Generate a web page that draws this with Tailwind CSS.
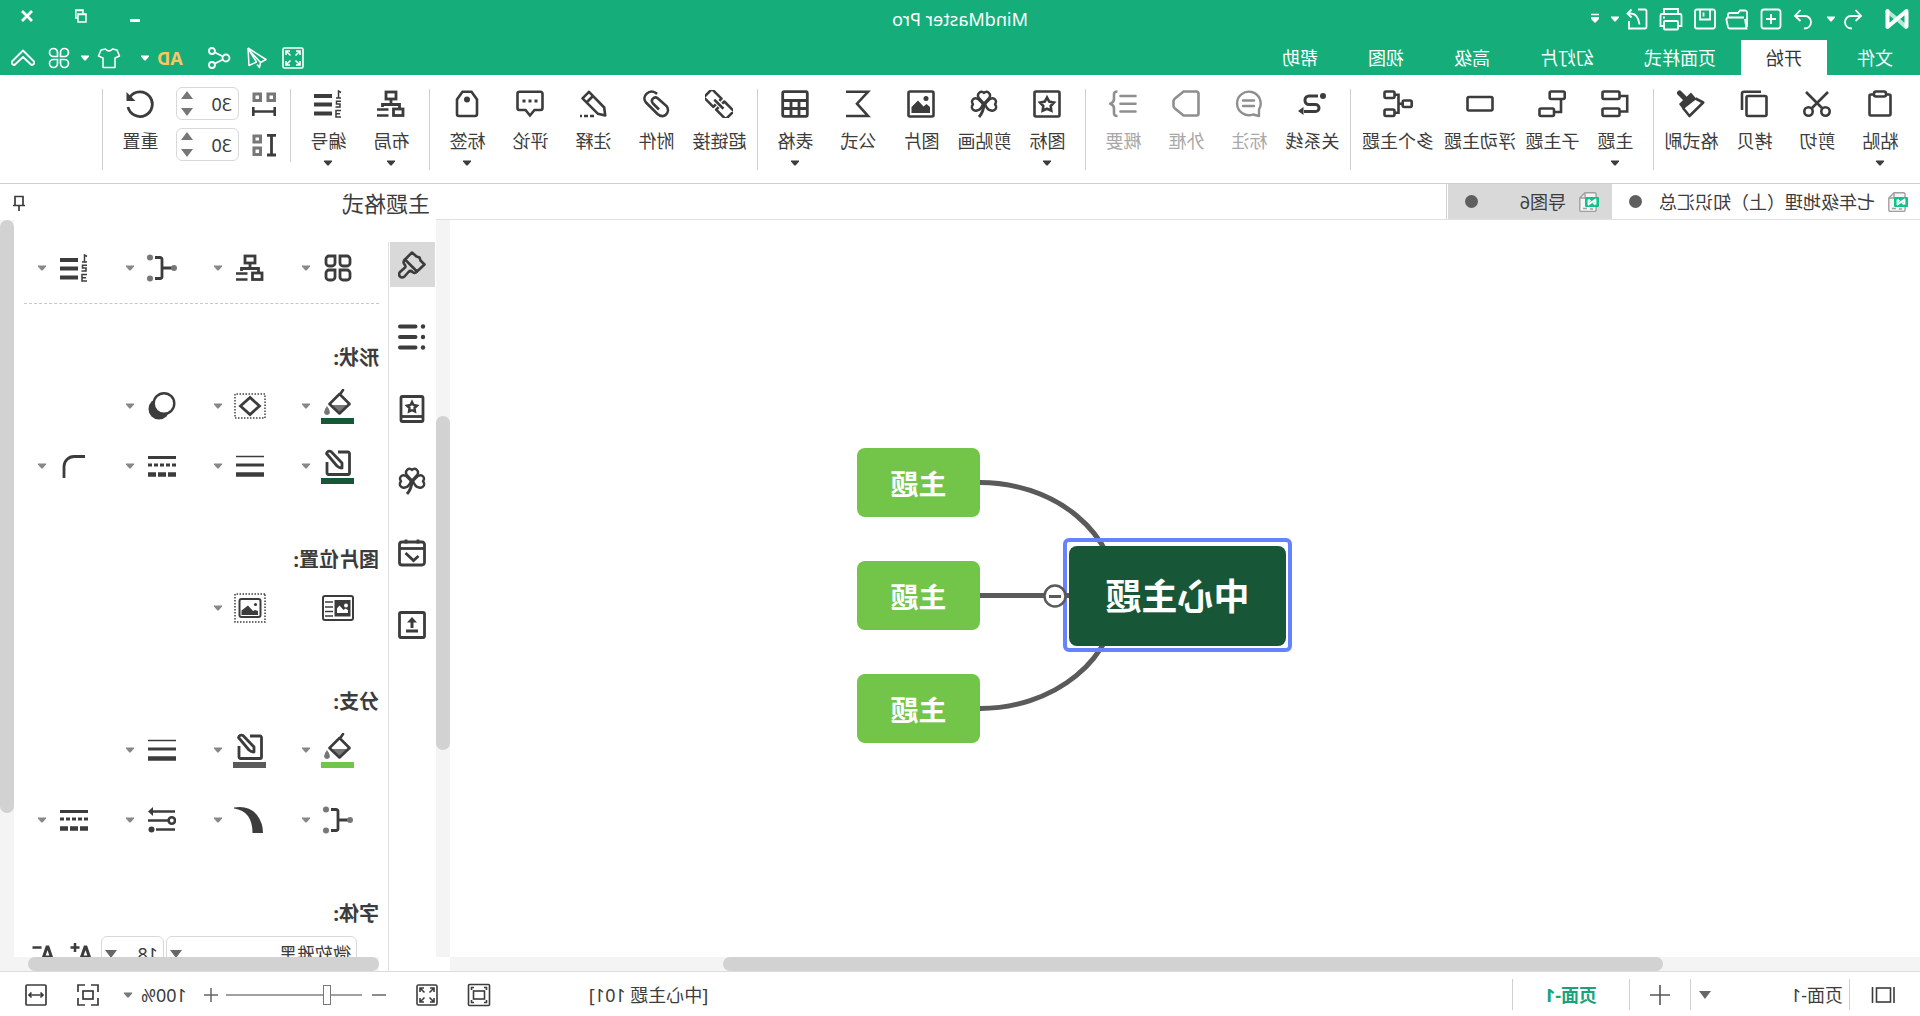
<!DOCTYPE html>
<html lang="zh-CN">
<head>
<meta charset="utf-8">
<title>MindMaster Pro</title>
<script src="https://cdn.jsdelivr.net/npm/@tailwindcss/browser@4"></script>
</head>
<body class="overflow-hidden bg-white">
<svg class="hidden" aria-hidden="true">
  <defs>
    <symbol id="caret" viewBox="0 0 8 5"><path d="M0 0h8v1L4.600 5h-1.200L0 1z" fill="currentColor"/></symbol>
    <symbol id="paste" viewBox="0 0 28 28"><g fill="none" stroke="currentColor" stroke-width="2.600"><rect x="3.500" y="4.500" width="21" height="21" rx="1.500"/><rect x="8" y="1.500" width="12" height="5" rx="2" fill="#fff"/></g></symbol>
    <symbol id="cut" viewBox="0 0 28 28"><g fill="none" stroke="currentColor" stroke-width="2.600"><circle cx="5.500" cy="21.500" r="4.200"/><circle cx="22.500" cy="21.500" r="4.200"/><path d="M8.500 18.500L25 2M19.500 18.500L3 2"/></g></symbol>
    <symbol id="copy" viewBox="0 0 28 28"><g fill="none" stroke="currentColor" stroke-width="2.600"><rect x="1.500" y="6" width="20" height="20" rx="1.500"/><path d="M7 1.800h17a2 2 0 0 1 2 2V20"/></g></symbol>
    <symbol id="brushfmt" viewBox="0 0 28 28"><path d="M25.500 3l-5 5" stroke="currentColor" stroke-width="5" stroke-linecap="round"/><path d="M14 2.500L26 14L22 19.500L8.500 9z" fill="currentColor"/><path d="M9.500 8.500L1.800 12.500L15.500 26L22 18" fill="none" stroke="currentColor" stroke-width="2.600" stroke-linejoin="round"/></symbol>
    <symbol id="topic" viewBox="0 0 28 28"><g fill="none" stroke="currentColor" stroke-width="2.600"><rect x="9.500" y="1.500" width="17" height="7.500" rx="1.500"/><rect x="9.500" y="18.500" width="17" height="7.500" rx="1.500"/><path d="M9 6H1.800v15.500H9"/></g></symbol>
    <symbol id="subtopic" viewBox="0 0 28 28"><g fill="none" stroke="currentColor" stroke-width="2.600"><rect x="1.300" y="1.500" width="15" height="7.500" rx="1.500"/><rect x="12" y="18.500" width="14.500" height="7.500" rx="1.500"/><path d="M5 9v13h7"/></g></symbol>
    <symbol id="float" viewBox="0 0 28 28"><rect x="1.500" y="7" width="25" height="13.500" rx="1.500" fill="none" stroke="currentColor" stroke-width="2.600"/></symbol>
    <symbol id="multi" viewBox="0 0 30 28"><g fill="none" stroke="currentColor" stroke-width="2.600"><rect x="1.300" y="10.500" width="9" height="6.500" rx="1.500"/><rect x="18.500" y="1.500" width="10" height="6.500" rx="1.500"/><rect x="18.500" y="19.500" width="10" height="6.500" rx="1.500"/><path d="M10 13.700h4.500M18 4.700h-3.500v18H18"/></g></symbol>
    <symbol id="relation" viewBox="0 0 28 28"><circle cx="3" cy="6" r="3" fill="currentColor"/><path d="M8 6h9a4 4 0 0 1 4 4v.500a4 4 0 0 1-4 4h-6.500a3.500 3.500 0 0 0-3.500 3.500a3.500 3.500 0 0 0 3.500 3.500H22" fill="none" stroke="currentColor" stroke-width="3"/><path d="M22.500 17l5.500 4-5.500 4z" fill="currentColor"/></symbol>
    <symbol id="callout" viewBox="0 0 28 28"><g fill="none" stroke="currentColor" stroke-width="2.400"><path d="M4 26v-6.500A11.800 11.800 0 1 1 10 24.500z" stroke-linejoin="round"/><path d="M9 10.500h11M9 16h11" stroke-linecap="round"/></g></symbol>
    <symbol id="frame" viewBox="0 0 28 28"><path d="M1.500 3.500a2 2 0 0 1 2-2H16.500L25 8.500q1.500 1.300 1.500 2.500v5q0 1.200-1.500 2.500L16.500 25.500H3.500a2 2 0 0 1-2-2z" fill="none" stroke="currentColor" stroke-width="2.600"/></symbol>
    <symbol id="summary" viewBox="0 0 28 28"><g fill="none" stroke="currentColor" stroke-width="2.600"><path d="M1.500 6h15M1.500 13.700h15M1.500 21.500h15" stroke-linecap="round"/><path d="M19.500 1.500c3 0 3.500 1 3.500 3v4.500c0 2 .800 3.500 3.500 4.700c-2.700 1.200-3.500 2.700-3.500 4.700V23c0 2-.500 3-3.500 3"/></g></symbol>
    <symbol id="star" viewBox="0 0 28 28"><g fill="none" stroke="currentColor" stroke-width="2.600"><rect x="1.500" y="1.500" width="25" height="25" rx="1.500"/><path d="M14 7.500l2.200 4.100 4.700.900-3.200 3.500.600 4.600L14 18.700l-4.300 1.900.600-4.600-3.200-3.500 4.700-.900z"/></g></symbol>
    <symbol id="clover" viewBox="0 0 28 28"><g fill="none" stroke="currentColor" stroke-width="2.400" stroke-linejoin="round"><path d="M14 13.500L8.500 7.500C6.500 4 11 -.500 14 3C17 -.500 21.500 4 19.500 7.500z"/><path d="M13 14L8 9C3.500 6.500 .500 11 3 14.200C.500 17.500 2.500 21.500 7 20.500C10 20 12 17 13 14z"/><path d="M15 14l5-5c4.500-2.500 7.500 2 5 5.200c2.500 3.300.500 7.300-4 6.300c-3-.500-5-3.500-6-6.500z"/><path d="M14 14q.500 8 5 13" stroke-width="3"/></g></symbol>
    <symbol id="picture" viewBox="0 0 28 28"><rect x="1.500" y="1.500" width="25" height="25" rx="1.500" fill="none" stroke="currentColor" stroke-width="2.600"/><circle cx="9" cy="8.500" r="2.500" fill="currentColor"/><path d="M5 23v-6l3.500-3 3 2.500L17 10.500l6.500 6.500v6z" fill="currentColor"/></symbol>
    <symbol id="sigma" viewBox="0 0 28 28"><path d="M26 1.800H4L15 13.700L4 26h22" fill="none" stroke="currentColor" stroke-width="2.600"/></symbol>
    <symbol id="table" viewBox="0 0 28 28"><g fill="none" stroke="currentColor" stroke-width="2.800"><rect x="1.700" y="1.700" width="24.600" height="24.600" rx="1.500"/><path d="M1.700 10.500h24.600M1.700 18.500h24.600M10 10v16M18 10v16"/></g></symbol>
    <symbol id="link" viewBox="0 0 28 28"><g transform="rotate(-45 14 14)" fill="none" stroke="currentColor" stroke-width="2.600" stroke-linejoin="round"><path d="M12 16.500V20H-1.500V8.500H12v3M16 11.500V8.500H29.500V20H16v-3.500M7.500 14.200h13"/></g></symbol>
    <symbol id="clip" viewBox="0 0 28 28"><path d="M13 4l1-1c7-4.500 15 3.500 10 9.500L12.500 24c-6.500 5.500-13.500-1.500-9-8L12 8.500c4-3 8 1.500 5 5L11 19.500" fill="none" stroke="currentColor" stroke-width="2.600"/></symbol>
    <symbol id="note" viewBox="0 0 28 28"><g fill="none" stroke="currentColor" stroke-width="2.600" stroke-linejoin="round"><path d="M1.800 25.500l1-8L18 1.800l6.500 6.500L9 23.800z"/><path d="M14 6l6.500 6.500"/><path d="M13 26h14" stroke-dasharray="4 2"/></g></symbol>
    <symbol id="comment" viewBox="0 0 28 28"><path d="M3.500 1.800h21a2 2 0 0 1 2 2V18a2 2 0 0 1-2 2h-6L14 25.500L9.500 20h-6a2 2 0 0 1-2-2V3.800a2 2 0 0 1 2-2z" fill="none" stroke="currentColor" stroke-width="2.600"/><path d="M6.500 11h15" stroke="currentColor" stroke-width="3" stroke-dasharray="3 3"/></symbol>
    <symbol id="tag" viewBox="0 0 28 28"><path d="M9.500 1.800h9L24 9.500V24a2 2 0 0 1-2 2H6a2 2 0 0 1-2-2V9.500z" fill="none" stroke="currentColor" stroke-width="2.600"/><circle cx="14" cy="9.500" r="3" fill="currentColor"/></symbol>
    <symbol id="layout" viewBox="0 0 28 28"><g fill="none" stroke="currentColor" stroke-width="2.800"><rect x="9" y="2" width="10" height="7"/><path d="M14 9v5M5.500 19v-4.500h17V17"/><rect x="2" y="19" width="9.500" height="6.500"/><path d="M16.500 19.500H28M16.500 25.500H28" stroke-width="2.400"/></g></symbol>
    <symbol id="number" viewBox="0 0 28 28"><g fill="none" stroke="currentColor"><path d="M10 6h18M10 14.500h18M10 23.500h18" stroke-width="4"/><path d="M1 2.500L3.500 1V7.500M1 8h5M1 11.200h4.500v2.800H2v3h4.500M1 20.500h5v6.500H1M2 23.700h4" stroke-width="1.500"/></g></symbol>
    <symbol id="hspace" viewBox="0 0 24 24"><g fill="none"><path d="M1.500 2h6.500v6.500H1.500zM15.500 2H22v6.500h-6.500z" stroke="#777" stroke-width="3"/><path d="M1.300 15v9M22.700 15v9M0 19.500h24" stroke="currentColor" stroke-width="2.600"/></g></symbol>
    <symbol id="vspace" viewBox="0 0 24 24"><g fill="none"><path d="M15.500 3H22v6h-6.500zM15.500 15H22v6.500h-6.500z" stroke="#777" stroke-width="3"/><path d="M0 2.300h9M0 22h9M4.500 2v20" stroke="currentColor" stroke-width="2.800"/></g></symbol>
    <symbol id="reset" viewBox="0 0 28 28"><path d="M26 17A12.300 12.300 0 1 1 24 7" fill="none" stroke="currentColor" stroke-width="2.800"/><path d="M27.500 2v9H18.500z" fill="currentColor"/></symbol>
    <symbol id="grid4" viewBox="0 0 28 28"><g fill="none" stroke="currentColor" stroke-width="2.800"><path d="M2 5a3 3 0 0 1 3-3h7v7a3 3 0 0 1-3 3H5a3 3 0 0 1-3-3zM17 2h6a3 3 0 0 1 3 3v4a3 3 0 0 1-3 3h-3a3 3 0 0 1-3-3zM5 16h7v7a3 3 0 0 1-3 3H5a3 3 0 0 1-3-3v-4a3 3 0 0 1 3-3zM17 16h6a3 3 0 0 1 3 3v4a3 3 0 0 1-3 3h-3a3 3 0 0 1-3-3z"/></g></symbol>
    <symbol id="branch" viewBox="0 0 30 28"><path d="M5 14h9M22 3.500h-5a2 2 0 0 0-2 2v17a2 2 0 0 0 2 2h5" fill="none" stroke="currentColor" stroke-width="2.800"/><g fill="#777"><circle cx="3" cy="14" r="3"/><circle cx="27" cy="3.500" r="3"/><circle cx="27" cy="24.500" r="3"/></g></symbol>
    <symbol id="paintbrush" viewBox="0 0 28 28"><g fill="none" stroke="currentColor" stroke-width="2.600" stroke-linejoin="round"><path d="M14 1.500L21 8.500L9 20.500L1.500 13.500L5.500 9.500L6.500 6.500L9.500 5.500z"/><path d="M21 8.500q2.500 2.500 .500 5q-2 2 0 3.500l4.500 4q2 2.500 0 4.500q-2 2-4.500 0l-4-4.500q-2-2-4 0q-2.500 2-4.500-.500"/></g></symbol>
    <symbol id="listdots" viewBox="0 0 28 28"><path d="M10.500 3.500h15.500M10.500 14h15.500M10.500 24.500h15.500" stroke="currentColor" stroke-width="4" stroke-linecap="round"/><g fill="currentColor"><circle cx="3" cy="3.500" r="2.200"/><circle cx="3" cy="14" r="2.200"/><circle cx="3" cy="24.500" r="2.200"/></g></symbol>
    <symbol id="book" viewBox="0 0 28 28"><g fill="none" stroke="currentColor" stroke-width="2.800"><rect x="3" y="1.500" width="22" height="25" rx="1.500"/><path d="M3 21.500h22"/><path d="M14 7l1.500 3 3.500.700-2.500 2.300.500 3.500-3-1.300-3 1.300.500-3.500L9 10.700l3.500-.700z" stroke-width="2.400"/></g></symbol>
    <symbol id="calendar" viewBox="0 0 28 28"><g fill="none" stroke="currentColor" stroke-width="2.800"><rect x="1.500" y="3" width="25" height="23" rx="2.500"/><path d="M1.500 9.500h25"/><path d="M8 .500v4M20 .500v4M7.500 17l5 4.500L20.500 14"/></g></symbol>
    <symbol id="upload" viewBox="0 0 28 28"><rect x="1.500" y="1.500" width="25" height="25" rx="1.500" fill="none" stroke="currentColor" stroke-width="2.800"/><path d="M14 6l5 5.500h-3.500V17h-3v-5.500H9zM8 18.500h12v3H8z" fill="currentColor"/></symbol>
    <symbol id="bucket" viewBox="0 0 28 28"><path d="M3.500 16h19L13 25z" fill="#777"/><path d="M9 1L12 5.500M12.500 5L2.500 15l10 9.500L22.500 15z" fill="none" stroke="currentColor" stroke-width="2.600" stroke-linejoin="round" stroke-linecap="round"/><path d="M25 17q3.500 4.500 2.800 7a3 3 0 0 1-5.600 0Q21.500 21.500 25 17z" fill="#777"/></symbol>
    <symbol id="penbox" viewBox="0 0 28 28"><g fill="none" stroke="currentColor" stroke-width="2.800" stroke-linejoin="round"><path d="M14 3H4a1.500 1.500 0 0 0-1.500 1.500V24A1.500 1.500 0 0 0 4 25.500h19.500A1.500 1.500 0 0 0 25 24V13"/><path d="M10 19v-5L21 2.500q3-1.500 4.500 2L15 17q-2 2-5 2z"/></g></symbol>
    <symbol id="shape" viewBox="0 0 32 26"><rect x="1" y="1" width="30" height="24" fill="none" stroke="#434343" stroke-width="1.500" stroke-dasharray="1.500 1.500"/><path d="M16 4.500l9.500 8.500L16 21.500 6.500 13z" fill="none" stroke="currentColor" stroke-width="2.800"/></symbol>
    <symbol id="shadow" viewBox="0 0 28 28"><circle cx="17" cy="17" r="10.500" fill="currentColor"/><circle cx="12" cy="11.500" r="10.300" fill="#fff" stroke="currentColor" stroke-width="2.400"/></symbol>
    <symbol id="weights" viewBox="0 0 28 24"><path d="M0 2.500h28" stroke="currentColor" stroke-width="1.500"/><path d="M0 11h28" stroke="currentColor" stroke-width="3"/><path d="M0 20.500h28" stroke="currentColor" stroke-width="4.500"/></symbol>
    <symbol id="dashes" viewBox="0 0 28 24"><path d="M0 3.500h28" stroke="currentColor" stroke-width="3"/><path d="M0 11h28" stroke="currentColor" stroke-width="3" stroke-dasharray="4 2"/><path d="M0 20.500h28" stroke="currentColor" stroke-width="4.500" stroke-dasharray="8 2"/></symbol>
    <symbol id="corner" viewBox="0 0 28 24"><path d="M3 2.500h11a10 10 0 0 1 10 10V24" fill="none" stroke="currentColor" stroke-width="2.800"/></symbol>
    <symbol id="picleft" viewBox="0 0 32 26"><rect x="1" y="1" width="30" height="24" rx="2" fill="none" stroke="currentColor" stroke-width="2"/><rect x="3.500" y="5" width="16" height="16.500" fill="currentColor"/><circle cx="8" cy="10.500" r="2" fill="#fff"/><path d="M6 18v-3l2.500-1.500 2 1.500 4-4.500 2.500 3V18z" fill="#fff"/><path d="M21 7h8M21 12h8M21 16.500h8M21 21h8" stroke="currentColor" stroke-width="1.500"/></symbol>
    <symbol id="picdot" viewBox="0 0 32 30"><rect x="1" y="1" width="30" height="28" fill="none" stroke="currentColor" stroke-width="1.500" stroke-dasharray="1.500 1.500"/><rect x="5.500" y="6" width="21" height="18" rx="2" fill="none" stroke="currentColor" stroke-width="2"/><circle cx="10.500" cy="11.500" r="1.600" fill="currentColor"/><path d="M8 22v-4l3-1 2 1 5-5.500 6.500 5V22z" fill="currentColor"/></symbol>
    <symbol id="taper" viewBox="0 0 30 28"><path d="M30 1.500Q15 -1 7 9Q1 17 1 27h10.500Q11.500 5 30 2.500z" fill="currentColor"/></symbol>
    <symbol id="arrows" viewBox="0 0 28 28"><g stroke="currentColor" stroke-width="2.600" fill="none"><path d="M1 5.500h23M8 14.500h20M1 23.500h19"/><circle cx="4.200" cy="14.500" r="3.200"/></g><path d="M23 1l5 4.500-5 4.500z" fill="currentColor"/><circle cx="24.500" cy="23.500" r="3" fill="currentColor"/></symbol>
    <symbol id="expand" viewBox="0 0 24 24"><g fill="none" stroke="currentColor" stroke-width="1.600"><rect x="2" y="2" width="20" height="20" rx="1.500"/><path d="M5 9V5h4M15 5h4v4M19 15v4h-4M9 19H5v-4M5.500 5.500L9.500 9.500M18.500 5.500l-4 4M5.500 18.500l4-4M18.500 18.500l-4-4"/></g></symbol>
    <symbol id="docicon" viewBox="0 0 20 20"><path d="M4.500 .800h9.500L19.200 6v12a1.400 1.400 0 0 1-1.400 1.400H4.300A1.400 1.400 0 0 1 2.900 18V2.200A1.400 1.400 0 0 1 4.500 .800z" fill="#f4f4f4" stroke="#a0a0a0" stroke-width="1.400"/><path d="M14 1v5h5M6 17h3M12 16.500h4" fill="none" stroke="#a0a0a0" stroke-width="1.400"/><rect x="0" y="5" width="14" height="10" rx="1" fill="#12c08a"/><path d="M3.500 12.500v-5L10.500 12.500v-5M3.500 12.500L6 10.700M10.500 7.500L8.500 9.300" fill="none" stroke="#fff" stroke-width="1.800" stroke-linejoin="round"/></symbol>
  </defs>
</svg>

<div class="flex h-screen w-full -scale-x-100 flex-col bg-white font-['Noto_Sans','Noto_Sans_CJK_SC',sans-serif] text-lg leading-7 text-[#3c3c3c]">

  <header class="bg-[#15ae7a] text-white">
    <div class="grid h-10 grid-cols-[1fr_auto_1fr]">
      <div class="flex items-center pb-0.5 pl-[11px]">
        <svg class="h-6 w-6" viewBox="0 0 24 24" role="img" aria-label="MindMaster" fill="none" stroke="#fff" stroke-linejoin="round" stroke-linecap="round"><path d="M14 10.500L21.500 4.500M3 20L10 13.500" stroke-width="4" stroke-opacity="0.700"/><path d="M2.500 19.500V4L21.500 20V4" stroke-width="4"/></svg>
        <button aria-label="撤销" class="ml-5"><svg class="h-6 w-6" viewBox="0 0 24 24" fill="none" stroke="currentColor" stroke-width="1.800"><path d="M9.500 3L4 9l5.500 5M4 9h10a6 6 0 0 1 6 6c0 4-3 6.500-7 6.500"/></svg></button>
        <button aria-label="撤销列表" class="ml-1.5"><svg class="h-1.5 w-2"><use href="#caret"/></svg></button>
        <button aria-label="重做" class="ml-3"><svg class="h-6 w-6" viewBox="0 0 24 24" fill="none" stroke="currentColor" stroke-width="1.800"><path d="M14.500 3L20 9l-5.500 5M20 9H10a6 6 0 0 0-6 6c0 4 3 6.500 7 6.500"/></svg></button>
        <button aria-label="新建" class="ml-2"><svg class="h-6 w-6" viewBox="0 0 24 24" fill="none" stroke="currentColor" stroke-width="1.800"><rect x="2.500" y="2.500" width="19" height="19" rx="2.500"/><path d="M12 7v10M7 12h10"/></svg></button>
        <button aria-label="打开" class="ml-2.5"><svg class="h-6 w-6" viewBox="0 0 24 24" fill="none" stroke="currentColor" stroke-width="1.800"><path d="M2 20V5.500a2 2 0 0 1 2-2h5l2 2.500h8a2 2 0 0 1 2 2v2"/><path d="M5 10.500h16a2 2 0 0 1 1.500 2.500L21 20a2 2 0 0 1-2 1.500H2.500L4 12"/></svg></button>
        <button aria-label="保存" class="ml-2"><svg class="h-6 w-6" viewBox="0 0 24 24" fill="none" stroke="currentColor" stroke-width="1.800"><rect x="2" y="2.500" width="20" height="19" rx="2"/><path d="M7 3v9.500h10V3M13.500 5.500v4"/></svg></button>
        <button aria-label="打印" class="ml-2.5"><svg class="h-6 w-6" viewBox="0 0 24 24" fill="none" stroke="currentColor" stroke-width="1.800"><path d="M5 7V2h14v5M5 19H1.500V8.500a1.500 1.500 0 0 1 1.500-1.500h18a1.500 1.500 0 0 1 1.500 1.500V19H19M18 10.500h2"/><rect x="5" y="14" width="14" height="8.500" rx="1"/></svg></button>
        <button aria-label="导出" class="ml-2.5"><svg class="h-6 w-6" viewBox="0 0 24 24" fill="none" stroke="currentColor" stroke-width="1.800"><path d="M11 2.500H4a1.500 1.500 0 0 0-1.500 1.500v16A1.500 1.500 0 0 0 4 21.500h16V14"/><path d="M17.500 2.500l4 4-4 4M21 6.500h-3q-7 0-8.500 11"/></svg></button>
        <button aria-label="导出列表" class="ml-1.5"><svg class="h-1.5 w-2"><use href="#caret"/></svg></button>
        <button aria-label="自定义快速访问" class="ml-3"><svg class="h-3 w-2" viewBox="0 0 8 12"><path d="M0 1.500h8" stroke="#fff" stroke-width="1.500"/><path d="M0 4h8v2L4 10 0 6z" fill="#fff"/></svg></button>
      </div>
      <h1 class="self-center pb-0.5">MindMaster Pro</h1>
      <div class="flex justify-end pb-2">
        <button aria-label="最小化" class="flex w-[54px] items-center justify-center"><span class="mt-2 h-[3px] w-2.5 bg-white"></span></button>
        <button aria-label="还原" class="flex w-[54px] items-center justify-center"><svg class="h-3.5 w-3" viewBox="0 0 12 14" fill="none" stroke="#fff" stroke-width="1.500"><path d="M1 5h8v8H1zM1 5.500h8"/><path d="M4 5V1h7.200v8H9M4 1.500h7"/></svg></button>
        <button aria-label="关闭" class="flex w-[54px] items-center justify-center"><svg class="h-3 w-3" viewBox="0 0 12 12"><path d="M1 1l10 10M11 1L1 11" stroke="#fff" stroke-width="2.800"/></svg></button>
      </div>
    </div>
    <div class="flex h-[35px] items-stretch justify-between">
      <nav class="flex">
        <button class="mr-[3px] w-[90px]">文件</button>
        <button class="bg-white px-[25px] text-[#333]">开始</button>
        <button class="px-[25px]">页面样式</button>
        <button class="px-[25px]">幻灯片</button>
        <button class="px-[25px]">高级</button>
        <button class="px-[25px]">视图</button>
        <button class="px-[25px]">帮助</button>
      </nav>
      <div class="flex items-center pr-[11px]">
        <button aria-label="全屏"><svg class="h-6 w-6"><use href="#expand"/></svg></button>
        <button aria-label="发送" class="ml-3"><svg class="h-6 w-6" viewBox="0 0 24 24" fill="none" stroke="currentColor" stroke-width="1.500" stroke-linejoin="round"><path d="M21 2L3 13.500L8.500 16.500L20 4M8.500 16.500L9.500 21.500L12 18.500M21 2L20 19.500L12.500 16L20 4"/></svg></button>
        <button aria-label="分享" class="ml-3.5"><svg class="h-6 w-6" viewBox="0 0 24 24" fill="none" stroke="currentColor" stroke-width="1.800"><circle cx="5" cy="12" r="3.500"/><circle cx="19" cy="5" r="3"/><circle cx="19" cy="19" r="3"/><path d="M8 10.500l8-4M8 13.500l8 4"/></svg></button>
        <button class="ml-6 font-bold text-[#f8c662]">AD</button>
        <button aria-label="广告列表" class="ml-2"><svg class="h-1.5 w-2"><use href="#caret"/></svg></button>
        <button aria-label="皮肤" class="ml-5"><svg class="h-6 w-6" viewBox="0 0 24 24" fill="none" stroke="currentColor" stroke-width="1.500" stroke-linejoin="round"><path d="M8.500 3q3.500 4 7 0L20 4l2.500 6L18 12v9.500H6V12L1.500 10 4 4z"/></svg></button>
        <button aria-label="皮肤列表" class="ml-2"><svg class="h-1.5 w-2"><use href="#caret"/></svg></button>
        <button aria-label="应用" class="ml-2.5"><svg class="h-6 w-6" viewBox="0 0 24 24" fill="none" stroke="currentColor" stroke-width="1.700"><path d="M10.500 10.500H6.500a4 4 0 1 1 4-4zM13.500 10.500v-4a4 4 0 1 1 4 4zM10.500 13.500v4a4 4 0 1 1-4-4zM13.500 13.500h4a4 4 0 1 1-4 4z"/></svg></button>
        <button aria-label="收起" class="ml-3"><svg class="h-6 w-6" viewBox="0 0 24 24" fill="none" stroke="currentColor" stroke-width="1.800" stroke-linejoin="round"><path d="M12 4.500L23 15.500q1 3-2.500 3.500L12 11l-8.500 8Q0 18.500 1 15.500z"/></svg></button>
      </div>
    </div>
  </header>

  <section class="flex h-[109px] shrink-0 items-start border-b border-[#cfcfcf] pl-2 leading-[26px] whitespace-nowrap" aria-label="开始">
    <button class="flex w-[63px] flex-col items-center pt-[15px]"><svg class="h-7 w-7"><use href="#paste"/></svg><span class="mt-[10px]">粘贴</span><svg class="mt-1.5 h-1.5 w-2"><use href="#caret"/></svg></button>
    <button class="flex w-[63px] flex-col items-center pt-[15px]"><svg class="h-7 w-7"><use href="#cut"/></svg><span class="mt-[10px]">剪切</span></button>
    <button class="flex w-[63px] flex-col items-center pt-[15px]"><svg class="h-7 w-7"><use href="#copy"/></svg><span class="mt-[10px]">拷贝</span></button>
    <button class="flex w-[63px] flex-col items-center pt-[15px]"><svg class="h-7 w-7"><use href="#brushfmt"/></svg><span class="mt-[10px]">格式刷</span></button>
    <span class="mx-1.5 mt-3.5 h-[81px] w-px bg-[#cfcfcf]"></span>
    <button class="flex w-[63px] flex-col items-center pt-[15px]"><svg class="h-7 w-7"><use href="#topic"/></svg><span class="mt-[10px]">主题</span><svg class="mt-1.5 h-1.5 w-2"><use href="#caret"/></svg></button>
    <button class="flex w-[63px] flex-col items-center pt-[15px]"><svg class="h-7 w-7"><use href="#subtopic"/></svg><span class="mt-[10px]">子主题</span></button>
    <button class="flex w-[82px] flex-col items-center pt-[15px]"><svg class="h-7 w-7"><use href="#float"/></svg><span class="mt-[10px]">浮动主题</span></button>
    <button class="flex w-[82px] flex-col items-center pt-[15px]"><svg class="h-7 w-[30px]"><use href="#multi"/></svg><span class="mt-[10px]">多个主题</span></button>
    <span class="mx-1.5 mt-3.5 h-[81px] w-px bg-[#cfcfcf]"></span>
    <button class="flex w-[63px] flex-col items-center pt-[15px]"><svg class="h-7 w-7"><use href="#relation"/></svg><span class="mt-[10px]">关系线</span></button>
    <button disabled class="flex w-[63px] flex-col items-center pt-[15px] text-[#8f8f8f]"><svg class="h-7 w-7"><use href="#callout"/></svg><span class="mt-[10px] text-[#a8a8a8]">标注</span></button>
    <button disabled class="flex w-[63px] flex-col items-center pt-[15px] text-[#8f8f8f]"><svg class="h-7 w-7"><use href="#frame"/></svg><span class="mt-[10px] text-[#a8a8a8]">外框</span></button>
    <button disabled class="flex w-[63px] flex-col items-center pt-[15px] text-[#8f8f8f]"><svg class="h-7 w-7"><use href="#summary"/></svg><span class="mt-[10px] text-[#a8a8a8]">概要</span></button>
    <span class="mx-1.5 mt-3.5 h-[81px] w-px bg-[#cfcfcf]"></span>
    <button class="flex w-[63px] flex-col items-center pt-[15px]"><svg class="h-7 w-7"><use href="#star"/></svg><span class="mt-[10px]">图标</span><svg class="mt-1.5 h-1.5 w-2"><use href="#caret"/></svg></button>
    <button class="flex w-[63px] flex-col items-center pt-[15px]"><svg class="h-7 w-7"><use href="#clover"/></svg><span class="mt-[10px]">剪贴画</span></button>
    <button class="flex w-[63px] flex-col items-center pt-[15px]"><svg class="h-7 w-7"><use href="#picture"/></svg><span class="mt-[10px]">图片</span></button>
    <button class="flex w-[63px] flex-col items-center pt-[15px]"><svg class="h-7 w-7"><use href="#sigma"/></svg><span class="mt-[10px]">公式</span></button>
    <button class="flex w-[63px] flex-col items-center pt-[15px]"><svg class="h-7 w-7"><use href="#table"/></svg><span class="mt-[10px]">表格</span><svg class="mt-1.5 h-1.5 w-2"><use href="#caret"/></svg></button>
    <span class="mx-1.5 mt-3.5 h-[81px] w-px bg-[#cfcfcf]"></span>
    <button class="flex w-[63px] flex-col items-center pt-[15px]"><svg class="h-7 w-7"><use href="#link"/></svg><span class="mt-[10px]">超链接</span></button>
    <button class="flex w-[63px] flex-col items-center pt-[15px]"><svg class="h-7 w-7"><use href="#clip"/></svg><span class="mt-[10px]">附件</span></button>
    <button class="flex w-[63px] flex-col items-center pt-[15px]"><svg class="h-7 w-7"><use href="#note"/></svg><span class="mt-[10px]">注释</span></button>
    <button class="flex w-[63px] flex-col items-center pt-[15px]"><svg class="h-7 w-7"><use href="#comment"/></svg><span class="mt-[10px]">评论</span></button>
    <button class="flex w-[63px] flex-col items-center pt-[15px]"><svg class="h-7 w-7"><use href="#tag"/></svg><span class="mt-[10px]">标签</span><svg class="mt-1.5 h-1.5 w-2"><use href="#caret"/></svg></button>
    <span class="mx-1.5 mt-3.5 h-[81px] w-px bg-[#cfcfcf]"></span>
    <button class="flex w-[63px] flex-col items-center pt-[15px]"><svg class="h-7 w-7"><use href="#layout"/></svg><span class="mt-[10px]">布局</span><svg class="mt-1.5 h-1.5 w-2"><use href="#caret"/></svg></button>
    <button class="flex w-[63px] flex-col items-center pt-[15px]"><svg class="h-7 w-7"><use href="#number"/></svg><span class="mt-[10px]">编号</span><svg class="mt-1.5 h-1.5 w-2"><use href="#caret"/></svg></button>
    <span class="mx-1.5 mt-3.5 h-[73px] w-px bg-[#cfcfcf]"></span>
    <div class="flex flex-col gap-2 pt-3 pr-1 pl-2">
      <div class="flex items-center gap-[13px]">
        <label for="hgap" aria-label="水平间距"><svg class="h-6 w-6"><use href="#hspace"/></svg></label>
        <div class="flex h-[33px] w-[63px] items-center justify-between rounded-md border border-[#d9d9d9] pr-1">
          <input id="hgap" value="30" class="w-9 pl-1.5 outline-none">
          <span class="flex flex-col gap-[9px]"><button aria-label="增加" class="h-0 w-0 border-x-[6px] border-b-8 border-x-transparent border-b-[#777]"></button><button aria-label="减少" class="h-0 w-0 border-x-[6px] border-t-8 border-x-transparent border-t-[#777]"></button></span>
        </div>
      </div>
      <div class="flex items-center gap-[13px]">
        <label for="vgap" aria-label="垂直间距"><svg class="h-6 w-6"><use href="#vspace"/></svg></label>
        <div class="flex h-[33px] w-[63px] items-center justify-between rounded-md border border-[#d9d9d9] pr-1">
          <input id="vgap" value="30" class="w-9 pl-1.5 outline-none">
          <span class="flex flex-col gap-[9px]"><button aria-label="增加" class="h-0 w-0 border-x-[6px] border-b-8 border-x-transparent border-b-[#777]"></button><button aria-label="减少" class="h-0 w-0 border-x-[6px] border-t-8 border-x-transparent border-t-[#777]"></button></span>
        </div>
      </div>
    </div>
    <button class="flex w-[63px] flex-col items-center pt-[15px]"><svg class="h-7 w-7"><use href="#reset"/></svg><span class="mt-[10px]">重置</span></button>
    <span class="mx-1.5 mt-3.5 h-[81px] w-px bg-[#cfcfcf]"></span>
  </section>

  <main class="flex min-h-0 flex-1">
    <section class="flex min-w-0 flex-1 flex-col">
      <div class="flex h-9 shrink-0 border-b border-[#e0e0e0]">
        <button class="flex w-[308px] items-center pl-3"><svg class="h-5 w-5"><use href="#docicon"/></svg><span class="ml-[13px]">七年级地理（上）知识汇总</span><span class="ml-[17px] h-[13px] w-[13px] rounded-full bg-[#5f5f5f]"></span></button>
        <button class="flex w-[164px] items-center bg-[#d9d9d9] pl-[13px]"><svg class="h-5 w-5"><use href="#docicon"/></svg><span class="ml-[13px]">导图6</span><span class="mr-[17px] ml-auto h-[13px] w-[13px] rounded-full bg-[#5f5f5f]"></span></button>
        <span class="ml-px w-px bg-[#d0d0d0]"></span>
      </div>
      <div class="flex min-h-0 flex-1">
        <div class="flex min-w-0 flex-1 flex-col">
          <div class="relative min-h-0 flex-1 overflow-hidden font-bold text-white">
            <svg class="absolute top-[228px] left-[628px] h-[295px] w-[435px] text-[#5a5a5a]" viewBox="0 0 435 295" fill="none" stroke="currentColor" stroke-width="5"><path d="M312 34.500A137 114 0 0 0 175 148A137 114 0 0 0 312 260.500"/></svg>
            <div class="absolute top-[318px] left-[628px] h-[114px] w-[229px] rounded-md border-4 border-[#6683ff]"></div>
            <svg class="absolute top-[364px] left-[846px] h-6 w-[94px]" viewBox="0 0 94 24"><path d="M0 11.500h94" stroke="#5a5a5a" stroke-width="5"/><circle cx="19" cy="12" r="10.500" fill="#fff" stroke="#5a5a5a" stroke-width="2.500"/><path d="M13 12.500h12" stroke="#5a5a5a" stroke-width="3"/></svg>
            <div class="absolute top-[326px] left-[634px] flex h-[100px] w-[217px] items-center justify-center rounded-lg bg-[#175636] pt-0.5 text-[36px] leading-10">中心主题</div>
            <div class="absolute top-[228px] left-[940px] flex h-[69px] w-[123px] items-center justify-center rounded-lg bg-[#73c54a] pt-0.5 text-[28px] leading-8">主题</div>
            <div class="absolute top-[341px] left-[940px] flex h-[69px] w-[123px] items-center justify-center rounded-lg bg-[#73c54a] pt-0.5 text-[28px] leading-8">主题</div>
            <div class="absolute top-[454px] left-[940px] flex h-[69px] w-[123px] items-center justify-center rounded-lg bg-[#73c54a] pt-0.5 text-[28px] leading-8">主题</div>
          </div>
          <div class="h-3.5 shrink-0 bg-[#f4f4f4] pr-[273px] pl-[257px]"><div class="h-full rounded-full bg-[#d2d2d2]"></div></div>
        </div>
        <div class="mb-3.5 w-3.5 shrink-0 bg-[#f4f4f4] pt-[196px]"><div class="h-[334px] rounded-full bg-[#d2d2d2]"></div></div>
      </div>
    </section>

    <aside class="flex w-[436px] shrink-0 flex-col">
      <div class="flex h-9 shrink-0 items-center justify-between pt-0.5 pr-3 pl-1.5">
        <h2 class="text-[22px]">主题格式</h2>
        <button aria-label="固定"><svg class="h-4 w-3.5" viewBox="0 0 14 16" fill="none" stroke="currentColor" stroke-width="1.700"><path d="M3 10V1.500h8V10M1 10.500h12M7 11v5"/></svg></button>
      </div>
      <div class="flex min-h-0 flex-1">
        <nav class="mt-[22px] flex w-12 shrink-0 flex-col gap-[27px] border-r border-[#e0e0e0] pl-px">
          <button aria-label="格式" class="flex h-[45px] w-[45px] items-center justify-center bg-[#d9d9d9]"><svg class="h-7 w-7"><use href="#paintbrush"/></svg></button>
          <button aria-label="大纲" class="flex h-[45px] w-[45px] items-center justify-center"><svg class="h-7 w-7"><use href="#listdots"/></svg></button>
          <button aria-label="图标" class="flex h-[45px] w-[45px] items-center justify-center"><svg class="h-7 w-7"><use href="#book"/></svg></button>
          <button aria-label="剪贴画" class="flex h-[45px] w-[45px] items-center justify-center"><svg class="h-7 w-7"><use href="#clover"/></svg></button>
          <button aria-label="任务" class="flex h-[45px] w-[45px] items-center justify-center"><svg class="h-7 w-7"><use href="#calendar"/></svg></button>
          <button aria-label="导出" class="flex h-[45px] w-[45px] items-center justify-center"><svg class="h-7 w-7"><use href="#upload"/></svg></button>
        </nav>
        <div class="flex min-w-0 flex-1 flex-col">
          <div class="flex min-h-0 flex-1">
            <div class="min-w-0 flex-1 overflow-hidden pl-[9px]">
              <div class="mr-2.5 grid h-[84px] grid-cols-[repeat(4,88px)] items-center border-b border-dashed border-[#c8c8c8] pt-3 pl-[25px]">
                <button class="flex items-center gap-3"><span class="flex w-8 justify-center"><svg class="h-7 w-7"><use href="#grid4"/></svg></span><svg class="h-1.5 w-2 text-[#888]"><use href="#caret"/></svg></button>
                <button class="flex items-center gap-3"><span class="flex w-8 justify-center"><svg class="h-7 w-7"><use href="#layout"/></svg></span><svg class="h-1.5 w-2 text-[#888]"><use href="#caret"/></svg></button>
                <button class="flex items-center gap-3"><span class="flex w-8 justify-center"><svg class="h-7 w-[30px]"><use href="#branch"/></svg></span><svg class="h-1.5 w-2 text-[#888]"><use href="#caret"/></svg></button>
                <button class="flex items-center gap-3"><span class="flex w-8 justify-center"><svg class="h-7 w-7"><use href="#number"/></svg></span><svg class="h-1.5 w-2 text-[#888]"><use href="#caret"/></svg></button>
              </div>
              <h3 class="mt-10 text-xl font-bold">形状:</h3>
              <div class="mt-1 grid h-[60px] grid-cols-[repeat(4,88px)] items-center pl-[25px]">
                <button class="flex items-center gap-3"><span class="flex w-8 flex-col items-center"><svg class="h-7 w-7"><use href="#bucket"/></svg><span class="mt-px h-1.5 w-[33px] bg-[#175636]"></span></span><svg class="h-1.5 w-2 text-[#888]"><use href="#caret"/></svg></button>
                <button class="flex items-center gap-3"><span class="flex w-8 justify-center"><svg class="h-[26px] w-8"><use href="#shape"/></svg></span><svg class="h-1.5 w-2 text-[#888]"><use href="#caret"/></svg></button>
                <button class="flex items-center gap-3"><span class="flex w-8 justify-center"><svg class="h-7 w-7"><use href="#shadow"/></svg></span><svg class="h-1.5 w-2 text-[#888]"><use href="#caret"/></svg></button>
              </div>
              <div class="grid h-[60px] grid-cols-[repeat(4,88px)] items-center pl-[25px]">
                <button class="flex items-center gap-3"><span class="flex w-8 flex-col items-center"><svg class="h-7 w-7"><use href="#penbox"/></svg><span class="mt-px h-1.5 w-[33px] bg-[#175636]"></span></span><svg class="h-1.5 w-2 text-[#888]"><use href="#caret"/></svg></button>
                <button class="flex items-center gap-3"><span class="flex w-8 justify-center"><svg class="h-6 w-7"><use href="#weights"/></svg></span><svg class="h-1.5 w-2 text-[#888]"><use href="#caret"/></svg></button>
                <button class="flex items-center gap-3"><span class="flex w-8 justify-center"><svg class="h-6 w-7"><use href="#dashes"/></svg></span><svg class="h-1.5 w-2 text-[#888]"><use href="#caret"/></svg></button>
                <button class="flex items-center gap-3"><span class="flex w-8 justify-center"><svg class="h-6 w-7"><use href="#corner"/></svg></span><svg class="h-1.5 w-2 text-[#888]"><use href="#caret"/></svg></button>
              </div>
              <h3 class="mt-[50px] text-xl font-bold">图片位置:</h3>
              <div class="mt-1 grid h-[60px] grid-cols-[repeat(4,88px)] items-center pl-[25px]">
                <button class="flex items-center gap-3"><svg class="h-[26px] w-8"><use href="#picleft"/></svg></button>
                <button class="flex items-center gap-3"><svg class="h-[30px] w-8"><use href="#picdot"/></svg><svg class="h-1.5 w-2 text-[#888]"><use href="#caret"/></svg></button>
              </div>
              <h3 class="mt-[50px] text-xl font-bold">分支:</h3>
              <div class="mt-1 grid h-[60px] grid-cols-[repeat(4,88px)] items-center pl-[25px]">
                <button class="flex items-center gap-3"><span class="flex w-8 flex-col items-center"><svg class="h-7 w-7"><use href="#bucket"/></svg><span class="mt-px h-1.5 w-[33px] bg-[#73c54a]"></span></span><svg class="h-1.5 w-2 text-[#888]"><use href="#caret"/></svg></button>
                <button class="flex items-center gap-3"><span class="flex w-8 flex-col items-center"><svg class="h-7 w-7"><use href="#penbox"/></svg><span class="mt-px h-1.5 w-[33px] bg-[#5a5a5a]"></span></span><svg class="h-1.5 w-2 text-[#888]"><use href="#caret"/></svg></button>
                <button class="flex items-center gap-3"><span class="flex w-8 justify-center"><svg class="h-6 w-7"><use href="#weights"/></svg></span><svg class="h-1.5 w-2 text-[#888]"><use href="#caret"/></svg></button>
              </div>
              <div class="mt-[10px] grid h-[60px] grid-cols-[repeat(4,88px)] items-center pl-[25px]">
                <button class="flex items-center gap-3"><span class="flex w-8 justify-center"><svg class="h-7 w-[30px]"><use href="#branch"/></svg></span><svg class="h-1.5 w-2 text-[#888]"><use href="#caret"/></svg></button>
                <button class="flex items-center gap-3"><span class="flex w-8 justify-end"><svg class="h-7 w-[30px]"><use href="#taper"/></svg></span><svg class="h-1.5 w-2 text-[#888]"><use href="#caret"/></svg></button>
                <button class="flex items-center gap-3"><span class="flex w-8 justify-center"><svg class="h-7 w-7"><use href="#arrows"/></svg></span><svg class="h-1.5 w-2 text-[#888]"><use href="#caret"/></svg></button>
                <button class="flex items-center gap-3"><span class="flex w-8 justify-center"><svg class="h-6 w-7"><use href="#dashes"/></svg></span><svg class="h-1.5 w-2 text-[#888]"><use href="#caret"/></svg></button>
              </div>
              <h3 class="mt-[50px] text-xl font-bold">字体:</h3>
              <div class="mt-2 flex h-9 items-center pl-[22px]">
                <div class="relative"><select aria-label="字体" class="h-9 w-[191px] appearance-none rounded-md border border-[#d9d9d9] pl-[5px]"><option>微软雅黑</option></select><span class="pointer-events-none absolute top-3.5 right-1 border-x-[6px] border-t-8 border-x-transparent border-t-[#666]"></span></div>
                <div class="relative ml-0.5"><select aria-label="字号" class="h-9 w-[63px] appearance-none rounded-md border border-[#d9d9d9] pl-[5px]"><option>18</option></select><span class="pointer-events-none absolute top-3.5 right-1 border-x-[6px] border-t-8 border-x-transparent border-t-[#666]"></span></div>
                <button aria-label="增大字号" class="ml-2"><svg class="h-6 w-6" viewBox="0 0 24 24" fill="none" stroke="currentColor"><path d="M1.500 21L7 5h1L13.500 21M4 15h7" stroke-width="3"/><path d="M13.500 5.500h9M18 1v9" stroke-width="2.500"/></svg></button>
                <button aria-label="减小字号" class="ml-3.5"><svg class="h-6 w-6" viewBox="0 0 24 24" fill="none" stroke="currentColor"><path d="M1.500 21L7 5h1L13.500 21M4 15h7" stroke-width="3"/><path d="M13.500 5.500h9" stroke-width="2.500"/></svg></button>
              </div>
            </div>
            <div class="w-3.5 shrink-0 bg-[#f4f4f4]"><div class="h-[593px] max-h-full rounded-full bg-[#d2d2d2]"></div></div>
          </div>
          <div class="ml-[9px] h-3.5 shrink-0 bg-[#f4f4f4] pr-7"><div class="h-full rounded-full bg-[#d2d2d2]"></div></div>
        </div>
      </div>
    </aside>
  </main>

  <footer class="flex h-[45px] shrink-0 items-center border-t border-[#dcdcdc] pt-px pl-[25px] whitespace-nowrap">
    <button aria-label="页面视图"><svg class="h-4 w-6" viewBox="0 0 24 16" fill="none" stroke="currentColor" stroke-width="1.600"><rect x="4.500" y="1" width="14" height="14"/><path d="M1 0v16M22.500 0v16"/></svg></button>
    <span class="ml-[21px] h-[31px] w-px bg-[#cfcfcf]"></span>
    <div class="relative flex w-[158px] items-center"><select aria-label="页面" class="w-full appearance-none pl-1.5 outline-none"><option>页面-1</option></select><span class="pointer-events-none absolute right-2 border-x-[6px] border-t-8 border-x-transparent border-t-[#666]"></span></div>
    <span class="h-[31px] w-px bg-[#cfcfcf]"></span>
    <button aria-label="添加页面" class="flex w-[60px] justify-center"><svg class="h-5 w-5" viewBox="0 0 20 20"><path d="M10 0v20M0 10h20" stroke="#555" stroke-width="1.600"/></svg></button>
    <span class="h-[31px] w-px bg-[#cfcfcf]"></span>
    <button class="w-[116px] font-bold text-[#1aa37a]">页面-1</button>
    <span class="h-[31px] w-px bg-[#cfcfcf]"></span>
    <div class="ml-auto flex items-center pr-6">
      <span>[中心主题 101]</span>
      <button aria-label="适合页面" class="ml-[98px]"><svg class="h-6 w-6" viewBox="0 0 24 24" fill="none" stroke="currentColor" stroke-width="1.600"><rect x="1.500" y="1.500" width="21" height="21" rx="1"/><rect x="6.500" y="8" width="11" height="8"/><path d="M4.500 7V4.500H7M17 4.500h2.500V7M19.500 17v2.500H17M7 19.500H4.500V17"/></svg></button>
      <button aria-label="全屏" class="ml-7"><svg class="h-6 w-6"><use href="#expand"/></svg></button>
      <button aria-label="缩小" class="ml-[29px]"><svg class="h-3.5 w-3.5" viewBox="0 0 14 14"><path d="M0 7h14" stroke="#666" stroke-width="1.500"/></svg></button>
      <input type="range" aria-label="缩放" min="0" max="100" value="24" class="ml-2.5 h-5 w-[136px] appearance-none bg-transparent [&::-webkit-slider-runnable-track]:h-0.5 [&::-webkit-slider-runnable-track]:bg-[#a0a0a0] [&::-webkit-slider-thumb]:-mt-[9px] [&::-webkit-slider-thumb]:h-5 [&::-webkit-slider-thumb]:w-2 [&::-webkit-slider-thumb]:appearance-none [&::-webkit-slider-thumb]:border [&::-webkit-slider-thumb]:border-[#777] [&::-webkit-slider-thumb]:bg-white">
      <button aria-label="放大" class="ml-2"><svg class="h-3.5 w-3.5" viewBox="0 0 14 14"><path d="M0 7h14M7 0v14" stroke="#666" stroke-width="1.500"/></svg></button>
      <button class="ml-[17px] flex items-center gap-[9px]">100%<svg class="h-1.5 w-2 text-[#777]"><use href="#caret"/></svg></button>
      <button aria-label="适合窗口" class="ml-6"><svg class="h-6 w-6" viewBox="0 0 24 24" fill="none" stroke="currentColor" stroke-width="1.700"><path d="M2 9V2h7M15 2h7v7M22 15v7h-7M9 22H2v-7"/><rect x="7" y="8" width="10" height="8"/></svg></button>
      <button aria-label="适合宽度" class="ml-7"><svg class="h-6 w-6" viewBox="0 0 24 24" fill="none" stroke="currentColor" stroke-width="1.700"><rect x="2" y="2" width="20" height="20" rx="1"/><path d="M5 12h14M7.500 9.500L5 12l2.500 2.500M16.500 9.500L19 12l-2.500 2.500"/></svg></button>
    </div>
  </footer>
</div>
</body>
</html>
